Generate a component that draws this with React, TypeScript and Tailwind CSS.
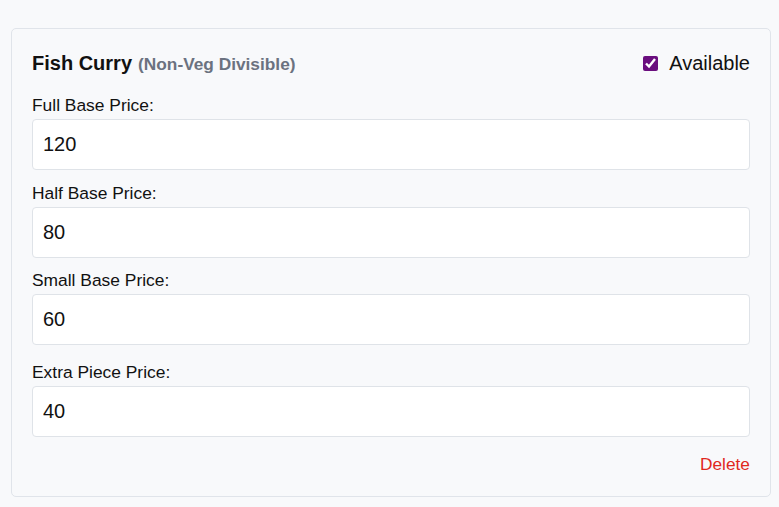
import React from "react";

const fields = [
  { label: "Full Base Price:", value: "120" },
  { label: "Half Base Price:", value: "80" },
  { label: "Small Base Price:", value: "60" },
];

function Field({ label, value, extraTop = false }: { label: string; value: string; extraTop?: boolean }) {
  return (
    <div className={extraTop ? "mt-[17px]" : "mt-[12.5px] first:mt-0"}>
      <label className="block text-[17.4px] leading-[20px] text-[#111111]">{label}</label>
      <input
        type="text"
        defaultValue={value}
        className="mt-[4px] block w-full h-[51px] rounded-[4px] border border-[#dfe3e8] bg-white px-[10px] text-[20px] text-[#111111] outline-none"
        style={{ fontFamily: '"Liberation Sans", Arial, sans-serif' }}
      />
    </div>
  );
}

export default function App() {
  return (
    <div
      className="min-h-[507px] w-full bg-[#f8f9fb] pt-[28px] pl-[11px]"
      style={{ fontFamily: '"Liberation Sans", Arial, sans-serif' }}
    >
      <div className="w-[760px] rounded-[5px] border border-[#e0e4ea] bg-[#f8f9fb] p-[20px]">
        <div className="flex h-[28px] items-center justify-between mb-[18px]">
          <div className="flex items-baseline">
            <span className="text-[20px] font-bold text-[#111111]">Fish Curry</span>
            <span className="ml-[6px] text-[17.3px] font-bold text-[#6b7280]">(Non-Veg Divisible)</span>
          </div>
          <label className="flex items-center">
            <input
              type="checkbox"
              defaultChecked
              className="m-0 h-[15px] w-[15px] accent-[#6a0e7e]"
            />
            <span className="ml-[11px] text-[20px] text-[#111111]">Available</span>
          </label>
        </div>
        <div>
          {fields.map((f) => (
            <Field key={f.label} label={f.label} value={f.value} />
          ))}
          <Field label="Extra Piece Price:" value="40" extraTop />
        </div>
        <div className="mt-[16px] flex justify-end">
          <button className="text-[17.3px] leading-[23px] text-[#e0281e] bg-transparent p-0">Delete</button>
        </div>
      </div>
    </div>
  );
}
